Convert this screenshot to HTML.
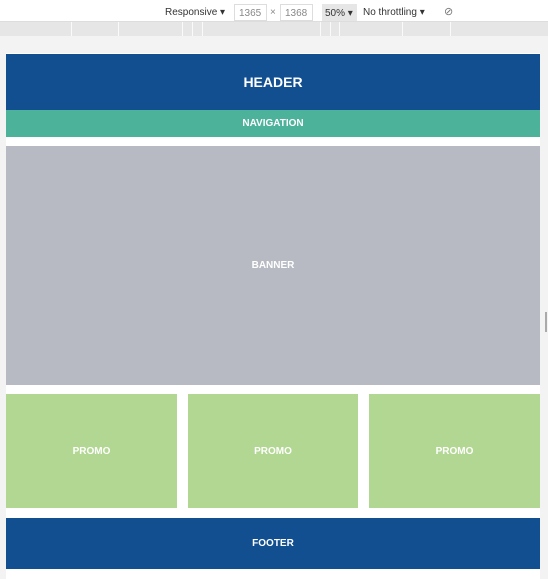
<!DOCTYPE html>
<html><head><meta charset="utf-8"><style>
*{margin:0;padding:0;box-sizing:border-box}
body{width:548px;height:579px;background:#f3f3f3;font-family:"Liberation Sans",Arial,sans-serif;position:relative;overflow:hidden}
.tb{position:absolute;left:0;top:0;width:548px;height:22px;background:#fff;border-bottom:1px solid #ddd;font-size:10px;color:#333}
.tb span{position:absolute;top:7px;white-space:nowrap}
.box{position:absolute;top:4px;height:17px;border:1px solid #ddd;background:#fff;color:#888;padding:3px 4px;font-size:10px;white-space:nowrap}
.ruler{position:absolute;left:0;top:22px;width:548px;height:14px;background:#e6e6e6}
.ruler i{position:absolute;top:0;width:1px;height:14px;background:#fafafa}
.page{position:absolute;left:6px;top:53px;width:534px;height:526px;background:#fff}
.b{position:absolute;color:#fff;font-weight:bold;font-size:10px;display:flex;align-items:center;justify-content:center}
.scroll{position:absolute;left:545px;top:312px;width:2px;height:20px;background:#aaa}
</style></head><body>
<div class="tb">
<span style="left:165px">Responsive ▾</span>
<div class="box" style="left:234px;width:33px">1365</div>
<span style="left:270px;color:#888">×</span>
<div class="box" style="left:280px;width:33px">1368</div>
<div class="box" style="left:322px;width:35px;background:#e6e6e6;border-color:#e6e6e6;color:#333;padding:3px 2px">50% ▾</div>
<span style="left:363px">No throttling ▾</span>
<span style="left:444px;color:#777;font-size:11px;top:5px">⊘</span>
</div>
<div class="ruler">
<i style="left:71px"></i><i style="left:118px"></i><i style="left:182px"></i><i style="left:192px"></i><i style="left:202px"></i><i style="left:320px"></i><i style="left:330px"></i><i style="left:339px"></i><i style="left:402px"></i><i style="left:450px"></i>
</div>
<div class="page"></div>
<div class="b" style="left:6px;top:54px;width:534px;height:56px;background:#114f91;font-size:14px">HEADER</div>
<div class="b" style="left:6px;top:110px;width:534px;height:27px;background:#4cb29a">NAVIGATION</div>
<div class="b" style="left:6px;top:146px;width:534px;height:239px;background:#b7bac3">BANNER</div>
<div class="b" style="left:6px;top:394px;width:171px;height:114px;background:#b1d792">PROMO</div>
<div class="b" style="left:188px;top:394px;width:170px;height:114px;background:#b1d792">PROMO</div>
<div class="b" style="left:369px;top:394px;width:171px;height:114px;background:#b1d792">PROMO</div>
<div class="b" style="left:6px;top:518px;width:534px;height:51px;background:#114f91">FOOTER</div>
<div class="scroll"></div>
</body></html>
